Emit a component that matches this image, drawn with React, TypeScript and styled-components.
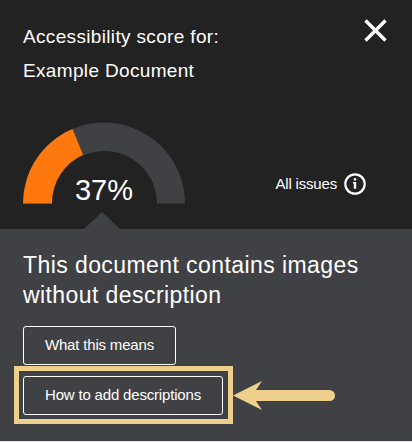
import React from "react";
import styled, { createGlobalStyle } from "styled-components";

const GlobalStyle = createGlobalStyle`
  * { box-sizing: border-box; }
  body {
    margin: 0;
    background: #d9d9db;
    color: #fff;
    font-family: "Liberation Sans", Arial, sans-serif;
  }
`;

const Card = styled.main`
  display: flex;
  flex-direction: column;
  width: 412px;
  height: 441px;
  background: #222;
`;

const Summary = styled.section`
  display: flex;
  flex-direction: column;
  justify-content: space-between;
  height: 229px;
  padding: 19px 25px 25px 23px;
`;

const TitleRow = styled.header`
  display: flex;
  justify-content: space-between;
  align-items: flex-start;
`;

const Title = styled.h1`
  margin: 0;
  padding-top: 1px;
  font-size: 19px;
  font-weight: 400;
  line-height: 34px;
  letter-spacing: 0.34px;
`;

const IconButton = styled.button`
  display: flex;
  padding: 0;
  border: 0;
  background: none;
  color: inherit;
`;

const ScoreRow = styled.div`
  display: flex;
  justify-content: space-between;
  align-items: flex-end;
`;

const Gauge = styled.div`
  position: relative;
  width: 162px;
  height: 82px;

  svg { display: block; }
`;

const Score = styled.span`
  position: absolute;
  left: 0;
  right: 0;
  bottom: -3px;
  font-size: 29px;
  line-height: 34px;
  text-align: center;
`;

const IssuesLink = styled.button`
  display: flex;
  align-items: center;
  gap: 7px;
  height: 24px;
  margin: 0 21px 8px 0;
  padding: 0;
  border: 0;
  background: none;
  color: inherit;
  font: 15px/20px "Liberation Sans", Arial, sans-serif;
  letter-spacing: -0.18px;
`;

const Issue = styled.section`
  position: relative;
  flex: 1;
  padding: 21px 23px 0;
  background: #404145;

  &::before {
    content: "";
    position: absolute;
    left: 84px;
    top: -17px;
    border: solid transparent;
    border-width: 0 18px 17px;
    border-bottom-color: #404145;
  }
`;

const IssueTitle = styled.h2`
  margin: 0 0 16px;
  font-size: 23px;
  font-weight: 400;
  line-height: 30px;
  letter-spacing: 0.42px;
`;

const Actions = styled.div`
  display: flex;
  flex-direction: column;
  align-items: flex-start;
  gap: 11px;
`;

const ActionButton = styled.button<{ $width: number }>`
  width: ${(p) => p.$width}px;
  height: 39px;
  padding: 0 0 2px;
  border: 1px solid #fff;
  border-radius: 3px;
  background: none;
  color: inherit;
  font: 15px/20px "Liberation Sans", Arial, sans-serif;
  letter-spacing: -0.18px;
  white-space: nowrap;
`;

const Highlighted = styled.div`
  position: relative;
  height: 39px;
`;

const Frame = styled.div`
  position: absolute;
  left: -9px;
  top: -10px;
  width: 219px;
  height: 58px;
  border: 5px solid #eed08c;
  pointer-events: none;
`;

const Arrow = styled.svg`
  position: absolute;
  left: 210px;
  top: 4px;
`;

export default function App() {
  return (
    <>
      <GlobalStyle />
      <Card>
        <Summary>
          <TitleRow>
            <Title>
              Accessibility score for:
              <br />
              Example Document
            </Title>
            <IconButton aria-label="Close">
              <svg width="23" height="23" viewBox="0 0 23 23" fill="none" stroke="#fff" strokeWidth="3.4">
                <path d="M1.5 1.5 21.5 21.5M21.5 1.5 1.5 21.5" />
              </svg>
            </IconButton>
          </TitleRow>
          <ScoreRow>
            <Gauge>
              <svg width="162" height="82" viewBox="0 0 162 82">
                <path d="M0 81.5A81 81 0 0 1 162 81.5H134A52.5 52.5 0 0 0 29 81.5Z" fill="#404145" />
                <path d="M0 81.5A81 81 0 0 1 49.5 7L60 32.7A52.5 52.5 0 0 0 29 81.5Z" fill="#ff780d" />
              </svg>
              <Score>37%</Score>
            </Gauge>
            <IssuesLink>
              All issues
              <svg width="22" height="22" viewBox="0 0 22 22" fill="none">
                <circle cx="11" cy="11" r="9.7" stroke="#fff" strokeWidth="2.2" />
                <path d="M9.8 5.2h2.4v2.2H9.8zM9 9h3.2v6.8H9.8v-5.4H9z" fill="#fff" />
              </svg>
            </IssuesLink>
          </ScoreRow>
        </Summary>
        <Issue>
          <IssueTitle>
            This document contains images
            <br />
            without description
          </IssueTitle>
          <Actions>
            <ActionButton $width={153}>What this means</ActionButton>
            <Highlighted>
              <ActionButton $width={200}>How to add descriptions</ActionButton>
              <Frame />
              <Arrow width="103" height="31" viewBox="0 0 103 31">
                <path d="M0 15.5 29 1 23 10H96.5A5.5 5.5 0 0 1 96.5 21H23L29 30Z" fill="#eed08c" />
              </Arrow>
            </Highlighted>
          </Actions>
        </Issue>
      </Card>
    </>
  );
}
